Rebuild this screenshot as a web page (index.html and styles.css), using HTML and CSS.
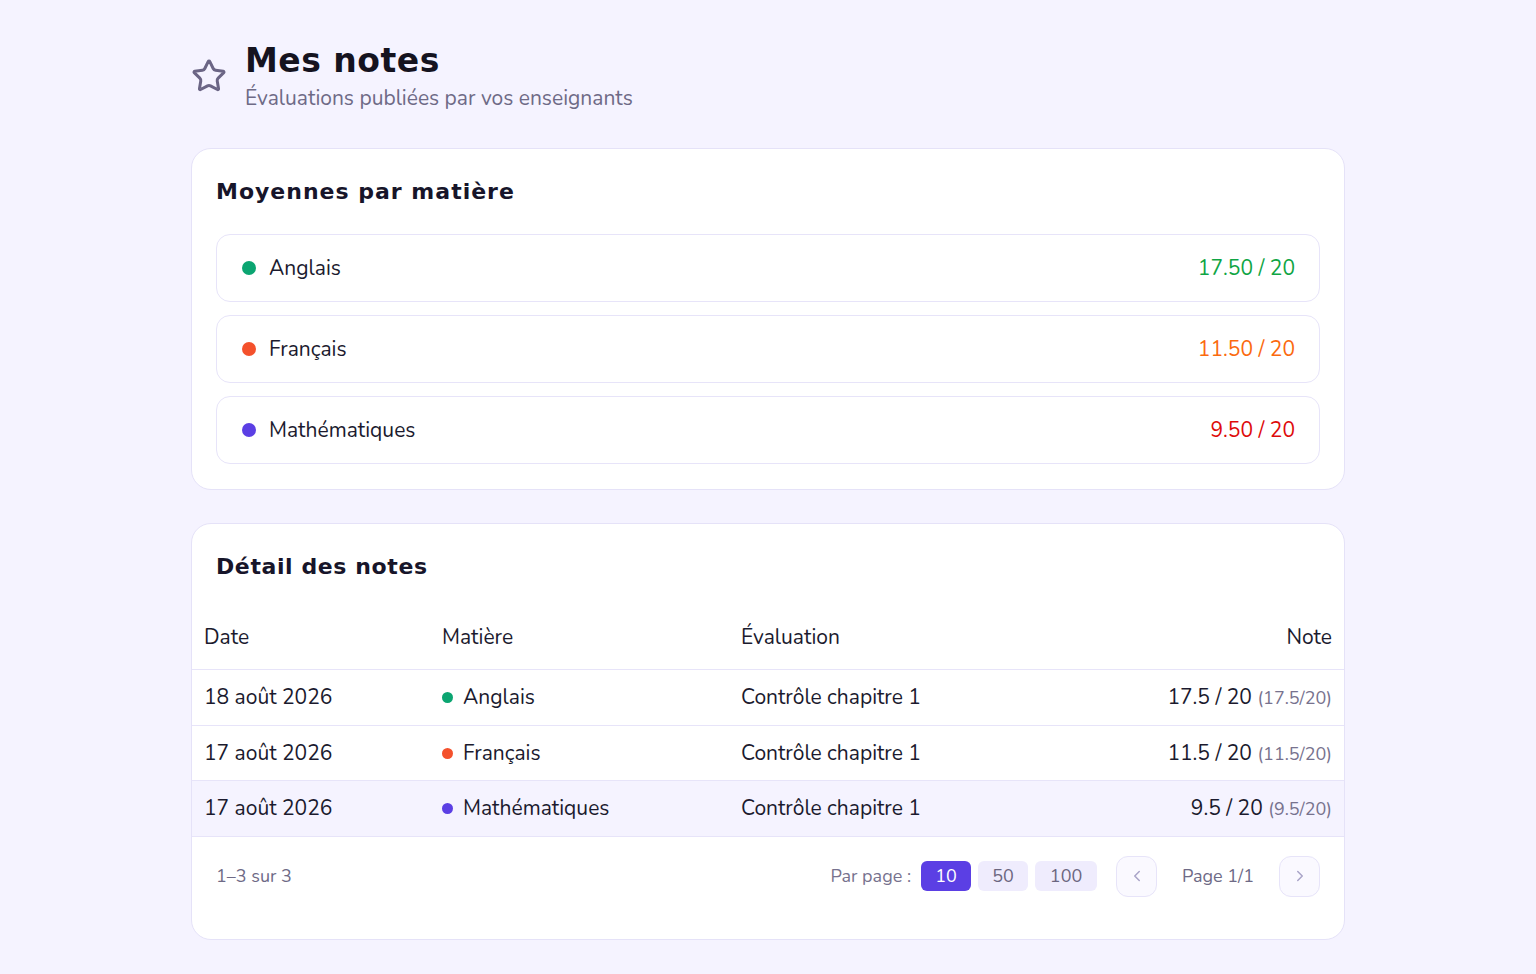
FILE: index.html
```html
<!DOCTYPE html>
<html lang="fr">
<head>
<meta charset="utf-8">
<title>Mes notes</title>
<link rel="stylesheet" href="styles.css">
</head>
<body>
<main class="page">
  <header class="page-head">
    <svg class="star" viewBox="0 0 24 24" width="36" height="36" fill="none" stroke="currentColor" stroke-width="2" stroke-linecap="round" stroke-linejoin="round"><path d="M11.525 2.295a.53.53 0 0 1 .95 0l2.31 4.679a2.123 2.123 0 0 0 1.595 1.16l5.166.756a.53.53 0 0 1 .294.904l-3.736 3.638a2.123 2.123 0 0 0-.611 1.878l.882 5.14a.53.53 0 0 1-.771.56l-4.618-2.428a2.122 2.122 0 0 0-1.973 0L6.396 21.010a.53.53 0 0 1-.77-.56l.881-5.139a2.122 2.122 0 0 0-.611-1.879L2.16 9.795a.53.53 0 0 1 .294-.906l5.165-.755a2.122 2.122 0 0 0 1.597-1.160z"/></svg>
    <div class="head-text">
      <h1 class="title">Mes notes</h1>
      <p class="subtitle">Évaluations publiées par vos enseignants</p>
    </div>
  </header>

  <section class="card card-avg">
    <h2 class="card-title">Moyennes par matière</h2>
    <ul class="avg-list">
      <li class="avg-row"><span class="subject"><span class="dot dot-green"></span>Anglais</span><span class="avg good">17.50 / 20</span></li>
      <li class="avg-row"><span class="subject"><span class="dot dot-orange"></span>Français</span><span class="avg mid">11.50 / 20</span></li>
      <li class="avg-row"><span class="subject"><span class="dot dot-purple"></span>Mathématiques</span><span class="avg bad">9.50 / 20</span></li>
    </ul>
  </section>

  <section class="card card-detail">
    <h2 class="card-title narrow">Détail des notes</h2>
    <table class="grades">
      <colgroup><col class="c-date"><col class="c-subj"><col class="c-eval"><col class="c-note"></colgroup>
      <thead>
        <tr><th>Date</th><th>Matière</th><th>Évaluation</th><th class="right">Note</th></tr>
      </thead>
      <tbody>
        <tr><td>18 août 2026</td><td><span class="sdot dot-green"></span>Anglais</td><td>Contrôle chapitre 1</td><td class="right">17.5 / 20 <span class="muted">(17.5/20)</span></td></tr>
        <tr class="short"><td>17 août 2026</td><td><span class="sdot dot-orange"></span>Français</td><td>Contrôle chapitre 1</td><td class="right">11.5 / 20 <span class="muted">(11.5/20)</span></td></tr>
        <tr class="hover"><td>17 août 2026</td><td><span class="sdot dot-purple"></span>Mathématiques</td><td>Contrôle chapitre 1</td><td class="right">9.5 / 20 <span class="muted">(9.5/20)</span></td></tr>
      </tbody>
    </table>
    <div class="pager">
      <span class="count">1–3 sur 3</span>
      <div class="pager-right">
        <span class="per-label">Par page :</span>
        <div class="sizes">
          <button class="size active">10</button>
          <button class="size">50</button>
          <button class="size wide">100</button>
        </div>
        <button class="nav" aria-label="Précédent"><svg viewBox="0 0 24 24" width="18" height="18" fill="none" stroke="currentColor" stroke-width="2" stroke-linecap="round" stroke-linejoin="round"><path d="m15 18-6-6 6-6"/></svg></button>
        <span class="page-num">Page 1/1</span>
        <button class="nav" aria-label="Suivant"><svg viewBox="0 0 24 24" width="18" height="18" fill="none" stroke="currentColor" stroke-width="2" stroke-linecap="round" stroke-linejoin="round"><path d="m9 18 6-6-6-6"/></svg></button>
      </div>
    </div>
  </section>
</main>
</body>
</html>
```

FILE: styles.css
```css
* { box-sizing: border-box; }
html, body { margin: 0; padding: 0; }
body {
  background: #f5f3ff;
  font-family: "Nunito", "Lato", "Noto Sans", sans-serif;
  color: #1b1a2e;
}
.page {
  width: 1154px;
  margin: 0 auto;
  padding-top: 40px;
}
.page-head {
  display: flex;
  align-items: center;
  gap: 18px;
  margin-bottom: 35px;
}
.star { color: #6b6585; flex: none; margin-top: -2px; }
.head-text { display: flex; flex-direction: column; }
.title {
  margin: 0;
  font-family: "DejaVu Sans", sans-serif;
  font-weight: 700;
  font-size: 33px;
  line-height: 42px;
  letter-spacing: 0.5px;
  color: #15131f;
}
.subtitle {
  margin: 1px 0 0;
  font-size: 21px;
  line-height: 30px;
  color: #6e6a86;
}
.card {
  background: #fff;
  border: 1px solid #e5e2f8;
  border-radius: 20px;
}
.card-avg { padding: 28px 24px 25px; margin-bottom: 33px; }
.card-title {
  margin: 0;
  font-family: "DejaVu Sans", sans-serif;
  font-weight: 700;
  font-size: 22px;
  line-height: 30px;
  letter-spacing: 1px;
  color: #17152a;
}
.card-title.narrow { letter-spacing: 0.6px; }
.avg-list {
  list-style: none;
  margin: 27px 0 0;
  padding: 0;
  display: flex;
  flex-direction: column;
  gap: 13px;
}
.avg-row {
  height: 68px;
  border: 1px solid #e7e4f9;
  border-radius: 14px;
  display: flex;
  align-items: center;
  justify-content: space-between;
  padding: 0 24px 0 25px;
  font-size: 21px;
}
.subject { display: flex; align-items: center; gap: 13px; }
.dot { width: 14px; height: 14px; border-radius: 50%; display: inline-block; }
.dot-green { background: #0ba571; }
.dot-orange { background: #f4512c; }
.dot-purple { background: #5b3fe4; }
.avg.good { color: #0fa544; }
.avg.mid { color: #fb6a0e; }
.avg.bad { color: #de0b0b; }

.card-detail { padding: 28px 0 0; }
.card-detail .card-title { padding: 0 24px; }
.grades {
  width: 100%;
  border-collapse: collapse;
  margin-top: 23px;
  table-layout: fixed;
  font-size: 21px;
}
.c-date { width: 238px; }
.c-subj { width: 299px; }
.c-eval { width: 340px; }
.grades th, .grades td {
  text-align: left;
  padding: 0 12px;
  height: 56px;
  font-weight: 400;
  border-bottom: 1px solid #e7e4f9;
  white-space: nowrap;
}
.grades tr.short td { height: 55px; }
.grades th { color: #1b1a2e; height: 64px; }
.grades .right { text-align: right; }
.grades tr.hover td { background: #f5f3ff; }
.sdot {
  display: inline-block;
  width: 11px;
  height: 11px;
  border-radius: 50%;
  margin-right: 10px;
  vertical-align: 1px;
}
.muted { font-size: 18px; color: #77728e; }

.pager {
  display: flex;
  justify-content: space-between;
  align-items: center;
  padding: 19px 24px 42px;
}
.count { font-size: 18px; color: #6e6a86; }
.pager-right { display: flex; align-items: center; }
.per-label { font-size: 18px; color: #77728e; margin-right: 10px; }
.sizes { display: flex; gap: 7px; margin-right: 19px; }
.size {
  font-family: inherit;
  font-size: 18px;
  width: 50px;
  height: 30px;
  border: none;
  border-radius: 6px;
  background: #efecfd;
  color: #6b6680;
  padding: 0;
}
.size.wide { width: 62px; }
.size.active { background: #5b3fe4; color: #fff; }
.nav {
  width: 41px;
  height: 41px;
  border: 1px solid #e7e4f9;
  border-radius: 12px;
  background: #faf9ff;
  color: #a9a4c8;
  display: flex;
  align-items: center;
  justify-content: center;
  padding: 0;
}
.page-num { font-size: 18px; color: #6e6a86; margin: 0 25px; }
```
